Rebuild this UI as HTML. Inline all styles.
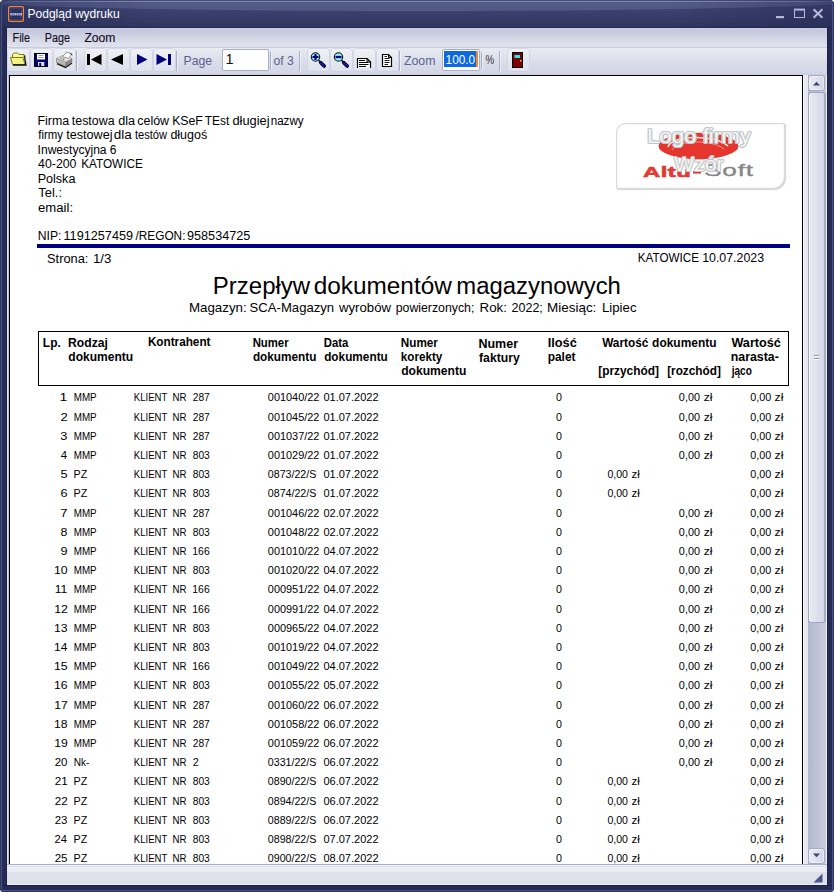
<!DOCTYPE html>
<html>
<head>
<meta charset="utf-8">
<title>Podgląd wydruku</title>
<style>
html,body{margin:0;padding:0;}
body{width:834px;height:892px;overflow:hidden;position:relative;background:#272c55;font-family:"Liberation Sans",sans-serif;}
.abs{position:absolute;}
.t{position:absolute;left:0;top:0;white-space:pre;transform-origin:0 0;font-family:"Liberation Sans",sans-serif;color:#000;}
#frame{position:absolute;left:0;top:0;width:834px;height:892px;background:#262b55;}
#titlegrad{position:absolute;left:0;top:0;width:834px;height:28px;overflow:hidden;background:linear-gradient(#2c3260 0,#2c3260 1px,#3e4573 1px,#3a416e 11px,#30365f 27px,#232852 27px,#232852 28px);}
#glass{position:absolute;left:-23px;top:-9px;width:880px;height:20px;border-radius:50%;background:rgba(140,150,190,.28);}
#tline{position:absolute;left:0;top:1px;width:834px;height:1px;background:linear-gradient(90deg,rgba(122,132,171,0) 0,rgba(122,132,171,.55) 4%,#7a84ab 18%,#7a84ab 82%,rgba(122,132,171,.55) 96%,rgba(122,132,171,0) 100%);}
#vign{position:absolute;left:0;top:0;width:834px;height:28px;background:linear-gradient(90deg,rgba(30,34,75,.4) 0,rgba(30,34,75,.34) 1.5%,rgba(30,34,75,0) 20%,rgba(30,34,75,0) 80%,rgba(30,34,75,.34) 98.5%,rgba(30,34,75,.4) 100%);}
#edgeL{position:absolute;left:0;top:28px;width:7px;height:857px;background:linear-gradient(90deg,#2e3560 0,#2e3560 1px,#465080 1px,#465080 2px,#262b55 2px,#262b55 6px,#1d224e 6px,#1d224e 7px);}
#edgeR{position:absolute;left:827px;top:28px;width:7px;height:857px;background:linear-gradient(90deg,#1d224e 0,#1d224e 1px,#262b55 1px,#262b55 5px,#465080 5px,#465080 6px,#2e3560 6px,#2e3560 7px);}
#edgeB{position:absolute;left:0;top:885px;width:834px;height:7px;background:linear-gradient(#1a1f4b 0,#1a1f4b 1px,#262b55 1px,#262b55 5px,#465080 5px,#465080 6px,#2e3560 6px,#2e3560 7px);}
#menubar{position:absolute;left:7px;top:28px;width:820px;height:20px;background:linear-gradient(#d0d3e3 0,#c6c9dd 1.5px,#c6c9dd 4px,#d2d5e4 10px,#dddfea 16px,#e0e2ec 19px,#c9ccde 19px,#c9ccde 20px);}
#toolbar{position:absolute;left:7px;top:48px;width:820px;height:27px;background:linear-gradient(#e9ebf2 0,#e3e5ee 6px,#d9dce8 16px,#d2d5e4 26px,#c9cce0 26px,#c9cce0 27px);}
.btn{position:absolute;top:49px;width:21px;height:22px;border-radius:3.5px;background:linear-gradient(#f0f1f6,#e6e8f0 50%,#dfe1ec);box-shadow:0 0 0 1px rgba(205,208,226,.7);}
.sep{position:absolute;top:51px;width:1px;height:20px;background:#a9aecb;box-shadow:1px 0 0 #eef0f6;}
.inp{position:absolute;top:49px;height:20px;background:#fff;border:1px solid #a9aecd;border-radius:2px;}
#client{position:absolute;left:7px;top:75px;width:820px;height:789px;background:linear-gradient(90deg,#dcdfec 0,#dcdfec 1px,#bbbfd8 1px,#bbbfd8 2px,#e8eaf0 2px,#e8eaf0 796px,#f4f5f9 796px,#f4f5f9 797px,#e8eaf0 797px,#e8eaf0 819px,#f0f1f7 819px,#f0f1f7 820px);}
#page{position:absolute;left:9px;top:75px;width:794px;height:789px;background:#fff;border-left:1px solid #000;border-top:1px solid #000;border-right:1px solid #000;box-sizing:border-box;}
#status{position:absolute;left:7px;top:864px;width:820px;height:21px;background:linear-gradient(#a9aeca 0,#a9aeca 1px,#f0f1f7 1px,#f0f1f7 2px,#dfe1ee 2px,#dfe1ee 3px,#eff0f5 3px,#e9ebf1 8px,#dee0ea 8px,#dee0ea 20px,#eceef4 20px,#eceef4 21px);}
#track{position:absolute;left:808px;top:75px;width:18px;height:789px;background:linear-gradient(90deg,#b3b7cf,#bcc0d6 40%,#c9ccde);}
.sbtn{position:absolute;left:808px;width:17px;height:16px;border-radius:3px;background:linear-gradient(90deg,#e9ebf2,#dfe2ec 55%,#d3d6e5);border:1px solid #a5aac8;box-sizing:border-box;box-shadow:inset 0 0 0 1px rgba(255,255,255,.5);}
#thumb{position:absolute;left:808px;top:92px;width:18px;height:531px;border-radius:3px;background:linear-gradient(90deg,#e8eaf1,#e0e3ec 45%,#d4d7e6);border:1px solid #a0a5c5;border-right:2px solid #a6abc9;box-sizing:border-box;box-shadow:inset 1px 0 0 rgba(255,255,255,.6);}
</style>
</head>
<body>
<div id="frame"></div>
<div id="titlegrad"><div id="glass"></div><div id="vign"></div><div id="tline"></div></div>
<div id="edgeB"></div><div id="edgeL"></div><div id="edgeR"></div>
<div class="abs" style="left:0;top:3px;width:2px;height:888px;background:linear-gradient(90deg,#2e3560 0,#2e3560 1px,#465080 1px,#465080 2px)"></div>
<div class="abs" style="left:832px;top:3px;width:2px;height:888px;background:linear-gradient(90deg,#465080 0,#465080 1px,#2e3560 1px,#2e3560 2px)"></div>
<!-- rounded window corners -->
<svg class="abs" style="left:0;top:0" width="834" height="892">
  <path d="M0 0h2.2L0 2.2z" fill="#fff"/><path d="M834 0h-2.200l2.200 2.200z" fill="#fff"/>
  <path d="M0 892h2L0 890z" fill="#e8e8ee"/><path d="M834 892h-2l2-2z" fill="#e8e8ee"/>
</svg>
<!-- app icon -->
<svg class="abs" style="left:8px;top:6px" width="16" height="16" viewBox="0 0 16 16">
  <path d="M1.600 .600h12.800l1 1v12.800l-1 1h-12.800l-1-1v-12.800z" fill="#2a3060" stroke="#f08438" stroke-width="1.200"/>
  <rect x="2.500" y="2.500" width="11" height="11" fill="none" stroke="#34427c" stroke-width="1"/>
  <rect x="2.400" y="7" width="11.600" height="2.400" fill="#b9bcd6"/>
  <path d="M4.400 7v2.400M6.200 7v2.400M8.400 7v2.400M10.400 7v2.400M12 7v2.400" stroke="#39406e" stroke-width=".6"/>
</svg>
<span id="t360" class="t" style="font-size:13px;line-height:13px;color:#fff;transform:translate(27.60px,7px) scaleX(0.9227);">Podgląd wydruku</span>
<!-- window buttons -->
<svg class="abs" style="left:770px;top:4px" width="60" height="20" viewBox="0 0 60 20">
  <rect x="6" y="12" width="8" height="2.2" fill="#b4b8d6"/>
  <rect x="24.5" y="5.5" width="10" height="8" fill="none" stroke="#b4b8d6" stroke-width="1"/>
  <rect x="24" y="4.6" width="11" height="2" fill="#b4b8d6"/>
  <path d="M43.6 5.2l8.8 8.6M52.4 5.2l-8.8 8.6" stroke="#b4b8d6" stroke-width="2.1" fill="none"/>
</svg>

<div id="menubar"></div>
<span id="t361" class="t" style="font-size:12px;line-height:12px;color:#150f25;transform:translate(12.60px,32px) scaleX(0.8954);-webkit-text-stroke:0.15px #150f25;">File</span>
<span id="t362" class="t" style="font-size:12px;line-height:12px;color:#150f25;transform:translate(44.80px,32px) scaleX(0.8994);-webkit-text-stroke:0.15px #150f25;">Page</span>
<span id="t363" class="t" style="font-size:12px;line-height:12px;color:#150f25;transform:translate(84.40px,32px) scaleX(1.0111);-webkit-text-stroke:0.15px #150f25;">Zoom</span>
<div id="toolbar"></div>

<!-- toolbar buttons -->
<div class="btn" style="left:8px"></div><div class="btn" style="left:31px"></div><div class="btn" style="left:54px"></div>
<div class="sep" style="left:76px"></div>
<div class="btn" style="left:85px"></div><div class="btn" style="left:108px"></div><div class="btn" style="left:131px"></div><div class="btn" style="left:154px"></div>
<div class="sep" style="left:176px"></div>
<div class="inp" style="left:222px;width:45px"></div>
<div class="sep" style="left:270px;top:52px;height:17px"></div>
<div class="sep" style="left:299px"></div>
<div class="btn" style="left:308px"></div><div class="btn" style="left:331px"></div><div class="btn" style="left:354px"></div><div class="btn" style="left:377px"></div>
<div class="sep" style="left:399px"></div>
<div class="inp" style="left:442px;width:36px"></div>
<div class="abs" style="left:444px;top:51px;width:32px;height:16px;background:#0d6ade"></div>
<div class="abs" style="left:476px;top:51px;width:1.500px;height:16px;background:#f08a30"></div>
<div class="sep" style="left:481px;top:52px;height:17px"></div>
<div class="sep" style="left:499px"></div>
<div class="btn" style="left:508px"></div>

<!-- toolbar icons -->
<svg class="abs" style="left:7px;top:48px" width="530" height="27" viewBox="7 48 530 27" shape-rendering="auto">
  <!-- open folder -->
  <path d="M12.500 57.500v-3l1.500-1.500h3.500l1.500 1.500h5v3" fill="#f6f6a6" stroke="#808000" stroke-width="1"/>
  <path d="M10.500 57.500h12.500l2 7h-12.500z" fill="#f2f284" stroke="#808000" stroke-width="1"/>
  <path d="M24.700 55.500v2.500l1.300 7h-13" fill="none" stroke="#111" stroke-width="1.300"/>
  <!-- save -->
  <rect x="34.500" y="53.500" width="13" height="13" fill="#00007f" stroke="#000" stroke-width="1"/>
  <rect x="37" y="54" width="8" height="5.500" fill="#fff"/>
  <path d="M38.500 55.500h5M38.500 57.500h5" stroke="#9a9a9a" stroke-width=".9"/>
  <rect x="38" y="62" width="6.300" height="4" fill="#dcdde6"/>
  <rect x="39.200" y="63" width="2" height="3" fill="#00007f"/>
  <!-- printer -->
  <path d="M57 63.500l8.500 4 6.500-4.500" stroke="#1a1a1a" stroke-width="1.500" fill="none"/>
  <path d="M56.500 58.500l9.500 3.500v4l-9.500-3.500z" fill="#bcbcbc" stroke="#7a7a7a" stroke-width=".6"/>
  <path d="M66 62l6-3.500v3.500l-6 4z" fill="#8a8a8a" stroke="#666" stroke-width=".5"/>
  <path d="M56.500 58.500l6-3 9.500 3-6 3.500z" fill="#e6e6e6" stroke="#8a8a8a" stroke-width=".6"/>
  <path d="M62.500 56.800l4-4.800 5.500 2-3.500 4.400z" fill="#fff" stroke="#6a6a6a" stroke-width=".7"/>
  <path d="M70 53.300l2.300 1.700" stroke="#222" stroke-width=".9"/>
  <rect x="60" y="57.600" width="2" height="1.200" fill="#20d040"/><rect x="62.500" y="58.600" width="2" height="1.200" fill="#f03030"/>
  <!-- first -->
  <rect x="87" y="54" width="3" height="11" fill="#000"/><path d="M101.500 54v11l-10.500-5.500z" fill="#000"/>
  <!-- prev -->
  <path d="M123 54v11l-12-5.500z" fill="#000"/>
  <!-- next -->
  <path d="M137 54v11l10.500-5.500z" fill="#00007f"/>
  <!-- last -->
  <path d="M156.500 54v11l10.500-5.500z" fill="#00007f"/><rect x="168" y="54" width="3" height="11" fill="#00007f"/>
  <!-- zoom in -->
  <path d="M318.5 60.200l3 3" stroke="#000" stroke-width="1.400"/>
  <path d="M320.8 62.700l3.400 3.400" stroke="#000" stroke-width="3.600" stroke-linecap="round"/>
  <path d="M321.0 62.900l3 3" stroke="#1414d0" stroke-width="2" stroke-linecap="round"/>
  <circle cx="315.5" cy="57" r="4.200" fill="#8aeef4" stroke="#111" stroke-width="1.100"/>
  <path d="M312.500 57h6M315.500 54v6" stroke="#00007f" stroke-width="2.200"/>
  <!-- zoom out -->
  <path d="M341.5 60.200l3 3" stroke="#000" stroke-width="1.400"/>
  <path d="M343.8 62.700l3.400 3.400" stroke="#000" stroke-width="3.600" stroke-linecap="round"/>
  <path d="M344.0 62.900l3 3" stroke="#1414d0" stroke-width="2" stroke-linecap="round"/>
  <circle cx="338.5" cy="57" r="4.200" fill="#8aeef4" stroke="#111" stroke-width="1.100"/>
  <path d="M335.500 57h6" stroke="#00007f" stroke-width="2.200"/>
  <!-- page width -->
  <path d="M357.500 68v-9.500h9.500l3.500 3.500v6" fill="#fff" stroke="#000" stroke-width="1.200"/>
  <path d="M367 58.500v3.500h3.500" fill="none" stroke="#000" stroke-width="1"/>
  <path d="M359 60.500h6M359 62.500h9.500M359 64.500h9.500M359 66.500h7" stroke="#000" stroke-width="1"/>
  <!-- whole page -->
  <path d="M382.500 54.500h6l3 3v9h-9z" fill="#fff" stroke="#000" stroke-width="1.200"/>
  <path d="M388.500 54.500v3h3" fill="none" stroke="#000" stroke-width="1"/>
  <path d="M384.500 56.500h2.500M384.500 58.500h5M384.500 60.500h5M384.500 62.500h5M384.500 64.500h3.500" stroke="#000" stroke-width=".9"/>
  <!-- door -->
  <rect x="512.500" y="52.500" width="10" height="15" fill="#7f0000" stroke="#000" stroke-width="1"/>
  <rect x="514.500" y="55" width="5.500" height="3" fill="#20ecf4"/>
  <rect x="520" y="60" width="1.500" height="1.500" fill="#f6d63a"/>
</svg>
<span id="t364" class="t" style="font-size:13px;line-height:13px;color:#5a6291;transform:translate(183.60px,54px) scaleX(0.9389);">Page</span>
<span id="t365" class="t" style="font-size:14.5px;line-height:14.5px;color:#111;transform:translate(225.40px,52px);">1</span>
<span id="t366" class="t" style="font-size:13px;line-height:13px;color:#5a6291;transform:translate(273.40px,54px) scaleX(0.9351);">of 3</span>
<span id="t367" class="t" style="font-size:13px;line-height:13px;color:#5a6291;transform:translate(404.00px,54px) scaleX(0.9454);">Zoom</span>
<span id="t368" class="t" style="font-size:13.5px;line-height:13.5px;color:#fff;transform:translate(445.60px,53px) scaleX(0.8753);">100.0</span>
<span id="t369" class="t" style="font-size:12px;line-height:12px;color:#333;transform:translate(485.50px,54px) scaleX(0.8146);">%</span>

<!-- client -->
<div id="client"></div>
<div id="page"></div>
<div id="track"></div>
<div class="sbtn" style="top:75px"></div>
<div id="thumb"></div>
<div class="sbtn" style="top:848px"></div>
<svg class="abs" style="left:808px;top:75px" width="18" height="789" viewBox="808 75 18 789">
  <path d="M813 85.500h7l-3.500-3.800z" fill="#3c4480"/>
  <path d="M813 853.500h7l-3.500 3.800z" fill="#3c4480"/>
  <path d="M814 355.500h5M814 358.500h5" stroke="#8e94b8" stroke-width="1"/>
  <path d="M814 356.500h5M814 359.500h5" stroke="#fff" stroke-width="1"/>
</svg>
<div id="status"></div>
<svg class="abs" style="left:810px;top:870px" width="16" height="14" viewBox="0 0 16 14"><path d="M3.500 12.500h9v-9z" fill="#4c548a"/></svg>

<!-- document -->
<div class="abs" style="left:37px;top:244px;width:753px;height:4px;background:#000080"></div>
<div class="abs" style="left:38px;top:331px;width:751px;height:55px;border:1px solid #000;box-sizing:border-box"></div>
<!-- logo -->
<div class="abs" style="left:616px;top:123px;width:169px;height:66px;border-radius:9px 1px 12px 1px;background:#fff;border:1px solid #dadada;box-sizing:border-box;box-shadow:1px 1px 1px #d4d4d4, inset 0 0 2px #e4e4e4;"></div>
<svg class="abs" style="left:615px;top:122px" width="170" height="67" viewBox="615 122 170 67">
  <ellipse cx="698.500" cy="146" rx="40" ry="13.200" fill="#e6352c"/>
  <path d="M668 147c3-12 48-13 60-1" fill="none" stroke="#fff" stroke-width="1.600" opacity=".9"/>
  <path d="M672 150c6-10 40-11 52-1" fill="none" stroke="#f5b0a8" stroke-width="1" opacity=".8"/>
  <rect x="693" y="171" width="8" height="2.600" fill="#e03a34"/>
</svg>
<span class="t" style="left:643px;top:164px;font-size:14.500px;line-height:16px;font-weight:bold;color:#e23a34;-webkit-text-stroke:.6px #e23a34;transform:scaleX(1.640);letter-spacing:.3px">Altu</span>
<span class="t" style="left:704px;top:162.6px;font-size:16px;line-height:16px;color:#858585;-webkit-text-stroke:.3px #858585;transform:scaleX(1.640);letter-spacing:.5px">Soft</span>
<span class="t" style="left:647px;top:126px;font-size:19.500px;line-height:20px;color:#f8f6e6;transform:scaleX(1.140);text-shadow:-1px 0 0 #bcc4d6,1px 0 0 #bcc4d6,0 -1px 0 #bcc4d6,0 1px 0 #bcc4d6,-.7px -.7px 0 #ccd2de,.7px .7px 0 #ccd2de,.7px -.7px 0 #ccd2de,-.7px .7px 0 #ccd2de">Logo firmy</span>
<span class="t" style="left:674px;top:154px;font-size:19.500px;line-height:20px;color:#f8f6e6;transform:scaleX(1.090);text-shadow:-1px 0 0 #bcc4d6,1px 0 0 #bcc4d6,0 -1px 0 #bcc4d6,0 1px 0 #bcc4d6,-.7px -.7px 0 #ccd2de,.7px .7px 0 #ccd2de,.7px -.7px 0 #ccd2de,-.7px .7px 0 #ccd2de">Wzór</span>
<span id="t0" class="t" style="font-size:12px;line-height:12px;transform:translate(37.56px,115px) scaleX(1.0292);">Firma</span>
<span id="t1" class="t" style="font-size:12px;line-height:12px;transform:translate(71.85px,115px) scaleX(1.0318);">testowa</span>
<span id="t2" class="t" style="font-size:12px;line-height:12px;transform:translate(118.13px,115px) scaleX(1.0539);">dla</span>
<span id="t3" class="t" style="font-size:12px;line-height:12px;transform:translate(137.23px,115px) scaleX(1.0373);">celów</span>
<span id="t4" class="t" style="font-size:12px;line-height:12px;transform:translate(172.15px,115px) scaleX(1.0211);">KSeF</span>
<span id="t5" class="t" style="font-size:12px;line-height:12px;transform:translate(204.72px,115px) scaleX(0.9966);">TEst</span>
<span id="t6" class="t" style="font-size:12px;line-height:12px;transform:translate(232.46px,115px) scaleX(1.0694);">długiej</span>
<span id="t7" class="t" style="font-size:12px;line-height:12px;transform:translate(270.66px,115px) scaleX(0.9709);">nazwy</span>
<span id="t8" class="t" style="font-size:12px;line-height:12px;transform:translate(38.32px,129px) scaleX(0.9507);">firmy</span>
<span id="t9" class="t" style="font-size:12px;line-height:12px;transform:translate(66.22px,129px) scaleX(1.0522);">testowej</span>
<span id="t10" class="t" style="font-size:12px;line-height:12px;transform:translate(113.64px,129px) scaleX(1.1251);">dla</span>
<span id="t11" class="t" style="font-size:12px;line-height:12px;transform:translate(134.97px,129px) scaleX(0.9249);">testów</span>
<span id="t12" class="t" style="font-size:12px;line-height:12px;transform:translate(170.39px,129px) scaleX(1.0405);">długoś</span>
<span id="t13" class="t" style="font-size:12px;line-height:12px;transform:translate(37.61px,144px) scaleX(1.0031);">Inwestycyjna 6</span>
<span id="t14" class="t" style="font-size:12px;line-height:12px;transform:translate(38.08px,158px) scaleX(1.0267);">40-200</span>
<span id="t15" class="t" style="font-size:12px;line-height:12px;transform:translate(81.17px,158px) scaleX(0.9794);">KATOWICE</span>
<span id="t16" class="t" style="font-size:12px;line-height:12px;transform:translate(37.63px,173px) scaleX(1.0487);">Polska</span>
<span id="t17" class="t" style="font-size:12px;line-height:12px;transform:translate(38.34px,187px) scaleX(1.0759);">Tel.:</span>
<span id="t18" class="t" style="font-size:12px;line-height:12px;transform:translate(38.03px,202px) scaleX(1.0936);">email:</span>
<span id="t19" class="t" style="font-size:12px;line-height:12px;transform:translate(37.71px,230px) scaleX(1.0139);">NIP:</span>
<span id="t20" class="t" style="font-size:12px;line-height:12px;transform:translate(63.50px,230px) scaleX(1.0563);">1191257459</span>
<span id="t21" class="t" style="font-size:12px;line-height:12px;transform:translate(135.50px,230px) scaleX(0.9854);">/REGON:</span>
<span id="t22" class="t" style="font-size:12px;line-height:12px;transform:translate(186.98px,230px) scaleX(1.0554);">958534725</span>
<span id="t23" class="t" style="font-size:12px;line-height:12px;transform:translate(47.05px,253px) scaleX(1.0681);">Strona:</span>
<span id="t24" class="t" style="font-size:12px;line-height:12px;transform:translate(92.91px,253px) scaleX(1.1020);">1/3</span>
<span id="t25" class="t" style="font-size:12px;line-height:12px;transform:translate(637.74px,252px) scaleX(0.9744);">KATOWICE</span>
<span id="t26" class="t" style="font-size:12px;line-height:12px;transform:translate(702.13px,252px) scaleX(1.0310);">10.07.2023</span>
<span id="t27" class="t" style="font-size:23.33px;line-height:23.33px;transform:translate(212.74px,275px) scaleX(1.0297);">Przepływ</span>
<span id="t28" class="t" style="font-size:23.33px;line-height:23.33px;transform:translate(313.65px,275px) scaleX(1.0444);">dokumentów</span>
<span id="t29" class="t" style="font-size:23.33px;line-height:23.33px;transform:translate(456.36px,275px) scaleX(1.0231);">magazynowych</span>
<span id="t30" class="t" style="font-size:13.33px;line-height:13.33px;transform:translate(188.94px,301px);">Magazyn:</span>
<span id="t31" class="t" style="font-size:13.33px;line-height:13.33px;transform:translate(249.62px,301px) scaleX(0.9836);">SCA-Magazyn</span>
<span id="t32" class="t" style="font-size:13.33px;line-height:13.33px;transform:translate(339.02px,301px) scaleX(0.9881);">wyrobów</span>
<span id="t33" class="t" style="font-size:13.33px;line-height:13.33px;transform:translate(395.71px,301px) scaleX(0.9234);">powierzonych;</span>
<span id="t34" class="t" style="font-size:13.33px;line-height:13.33px;transform:translate(479.53px,301px);">Rok:</span>
<span id="t35" class="t" style="font-size:13.33px;line-height:13.33px;transform:translate(511.51px,301px) scaleX(0.9390);">2022;</span>
<span id="t36" class="t" style="font-size:13.33px;line-height:13.33px;transform:translate(547.07px,301px) scaleX(1.0083);">Miesiąc:</span>
<span id="t37" class="t" style="font-size:13.33px;line-height:13.33px;transform:translate(601.90px,301px) scaleX(0.9939);">Lipiec</span>
<span id="t38" class="t" style="font-size:12px;line-height:12px;font-weight:bold;transform:translate(42.86px,337px) scaleX(0.9953);">Lp.</span>
<span id="t39" class="t" style="font-size:12px;line-height:12px;font-weight:bold;transform:translate(68.07px,337px) scaleX(1.0130);">Rodzaj</span>
<span id="t40" class="t" style="font-size:12px;line-height:12px;font-weight:bold;transform:translate(68.34px,351px) scaleX(1.0035);">dokumentu</span>
<span id="t41" class="t" style="font-size:12px;line-height:12px;font-weight:bold;transform:translate(147.88px,336px) scaleX(0.9782);">Kontrahent</span>
<span id="t42" class="t" style="font-size:12px;line-height:12px;font-weight:bold;transform:translate(252.63px,337px) scaleX(0.9456);">Numer</span>
<span id="t43" class="t" style="font-size:12px;line-height:12px;font-weight:bold;transform:translate(252.92px,351px) scaleX(0.9806);">dokumentu</span>
<span id="t44" class="t" style="font-size:12px;line-height:12px;font-weight:bold;transform:translate(323.80px,337px) scaleX(0.9469);">Data</span>
<span id="t45" class="t" style="font-size:12px;line-height:12px;font-weight:bold;transform:translate(324.13px,351px) scaleX(0.9842);">dokumentu</span>
<span id="t46" class="t" style="font-size:12px;line-height:12px;font-weight:bold;transform:translate(400.81px,337px) scaleX(0.9763);">Numer</span>
<span id="t47" class="t" style="font-size:12px;line-height:12px;font-weight:bold;transform:translate(400.79px,351px) scaleX(0.9716);">korekty</span>
<span id="t48" class="t" style="font-size:12px;line-height:12px;font-weight:bold;transform:translate(401.17px,365px) scaleX(1.0076);">dokumentu</span>
<span id="t49" class="t" style="font-size:12px;line-height:12px;font-weight:bold;transform:translate(478.46px,338px) scaleX(1.0404);">Numer</span>
<span id="t50" class="t" style="font-size:12px;line-height:12px;font-weight:bold;transform:translate(479.04px,352px) scaleX(1.0159);">faktury</span>
<span id="t51" class="t" style="font-size:12px;line-height:12px;font-weight:bold;transform:translate(547.73px,337px) scaleX(1.0617);">Ilość</span>
<span id="t52" class="t" style="font-size:12px;line-height:12px;font-weight:bold;transform:translate(547.68px,351px) scaleX(0.9936);">palet</span>
<span id="t53" class="t" style="font-size:12px;line-height:12px;font-weight:bold;transform:translate(602.15px,337px) scaleX(0.9850);">Wartość</span>
<span id="t54" class="t" style="font-size:12px;line-height:12px;font-weight:bold;transform:translate(652.12px,337px) scaleX(0.9946);">dokumentu</span>
<span id="t55" class="t" style="font-size:12px;line-height:12px;font-weight:bold;transform:translate(598.25px,365px) scaleX(0.9881);">[przychód]</span>
<span id="t56" class="t" style="font-size:12px;line-height:12px;font-weight:bold;transform:translate(667.14px,365px) scaleX(0.9818);">[rozchód]</span>
<span id="t57" class="t" style="font-size:12px;line-height:12px;font-weight:bold;transform:translate(731.41px,337px) scaleX(1.0525);">Wartość</span>
<span id="t58" class="t" style="font-size:12px;line-height:12px;font-weight:bold;transform:translate(730.73px,351px) scaleX(1.0294);">narasta-</span>
<span id="t59" class="t" style="font-size:12px;line-height:12px;font-weight:bold;transform:translate(731.66px,365px) scaleX(0.8389);">jąco</span>
<span id="t60" class="t" style="font-size:10.67px;line-height:10.67px;transform:translate(59.61px,392px) scaleX(1.3185);">1</span>
<span id="t61" class="t" style="font-size:10.67px;line-height:10.67px;transform:translate(73.72px,392px) scaleX(0.9192);">MMP</span>
<span id="t62" class="t" style="font-size:10.67px;line-height:10.67px;transform:translate(133.87px,392px) scaleX(0.8952);">KLIENT</span>
<span id="t63" class="t" style="font-size:10.67px;line-height:10.67px;transform:translate(172.62px,392px) scaleX(0.9096);">NR</span>
<span id="t64" class="t" style="font-size:10.67px;line-height:10.67px;transform:translate(192.77px,392px) scaleX(0.9579);">287</span>
<span id="t65" class="t" style="font-size:10.67px;line-height:10.67px;transform:translate(267.86px,392px) scaleX(1.0231);">001040/22</span>
<span id="t66" class="t" style="font-size:10.67px;line-height:10.67px;transform:translate(323.39px,392px) scaleX(1.0342);">01.07.2022</span>
<span id="t67" class="t" style="font-size:10.67px;line-height:10.67px;transform:translate(556.03px,392px);">0</span>
<span id="t68" class="t" style="font-size:10.67px;line-height:10.67px;transform:translate(678.87px,392px) scaleX(1.0168);">0,00</span>
<span id="t69" class="t" style="font-size:10.67px;line-height:10.67px;transform:translate(703.77px,392px) scaleX(1.1455);">zł</span>
<span id="t70" class="t" style="font-size:10.67px;line-height:10.67px;transform:translate(750.37px,392px) scaleX(1.0095);">0,00</span>
<span id="t71" class="t" style="font-size:10.67px;line-height:10.67px;transform:translate(774.61px,392px) scaleX(1.1503);">zł</span>
<span id="t72" class="t" style="font-size:10.67px;line-height:10.67px;transform:translate(60.48px,412px) scaleX(1.2158);">2</span>
<span id="t73" class="t" style="font-size:10.67px;line-height:10.67px;transform:translate(73.72px,412px) scaleX(0.9192);">MMP</span>
<span id="t74" class="t" style="font-size:10.67px;line-height:10.67px;transform:translate(133.87px,412px) scaleX(0.8952);">KLIENT</span>
<span id="t75" class="t" style="font-size:10.67px;line-height:10.67px;transform:translate(172.62px,412px) scaleX(0.9096);">NR</span>
<span id="t76" class="t" style="font-size:10.67px;line-height:10.67px;transform:translate(192.77px,412px) scaleX(0.9579);">287</span>
<span id="t77" class="t" style="font-size:10.67px;line-height:10.67px;transform:translate(267.86px,412px) scaleX(1.0231);">001045/22</span>
<span id="t78" class="t" style="font-size:10.67px;line-height:10.67px;transform:translate(323.39px,412px) scaleX(1.0342);">01.07.2022</span>
<span id="t79" class="t" style="font-size:10.67px;line-height:10.67px;transform:translate(556.03px,412px);">0</span>
<span id="t80" class="t" style="font-size:10.67px;line-height:10.67px;transform:translate(678.87px,412px) scaleX(1.0168);">0,00</span>
<span id="t81" class="t" style="font-size:10.67px;line-height:10.67px;transform:translate(703.77px,412px) scaleX(1.1455);">zł</span>
<span id="t82" class="t" style="font-size:10.67px;line-height:10.67px;transform:translate(750.37px,412px) scaleX(1.0095);">0,00</span>
<span id="t83" class="t" style="font-size:10.67px;line-height:10.67px;transform:translate(774.61px,412px) scaleX(1.1503);">zł</span>
<span id="t84" class="t" style="font-size:10.67px;line-height:10.67px;transform:translate(60.36px,431px) scaleX(1.1988);">3</span>
<span id="t85" class="t" style="font-size:10.67px;line-height:10.67px;transform:translate(73.72px,431px) scaleX(0.9192);">MMP</span>
<span id="t86" class="t" style="font-size:10.67px;line-height:10.67px;transform:translate(133.87px,431px) scaleX(0.8952);">KLIENT</span>
<span id="t87" class="t" style="font-size:10.67px;line-height:10.67px;transform:translate(172.62px,431px) scaleX(0.9096);">NR</span>
<span id="t88" class="t" style="font-size:10.67px;line-height:10.67px;transform:translate(192.77px,431px) scaleX(0.9579);">287</span>
<span id="t89" class="t" style="font-size:10.67px;line-height:10.67px;transform:translate(267.86px,431px) scaleX(1.0231);">001037/22</span>
<span id="t90" class="t" style="font-size:10.67px;line-height:10.67px;transform:translate(323.39px,431px) scaleX(1.0342);">01.07.2022</span>
<span id="t91" class="t" style="font-size:10.67px;line-height:10.67px;transform:translate(556.03px,431px);">0</span>
<span id="t92" class="t" style="font-size:10.67px;line-height:10.67px;transform:translate(678.87px,431px) scaleX(1.0168);">0,00</span>
<span id="t93" class="t" style="font-size:10.67px;line-height:10.67px;transform:translate(703.77px,431px) scaleX(1.1455);">zł</span>
<span id="t94" class="t" style="font-size:10.67px;line-height:10.67px;transform:translate(750.37px,431px) scaleX(1.0095);">0,00</span>
<span id="t95" class="t" style="font-size:10.67px;line-height:10.67px;transform:translate(774.61px,431px) scaleX(1.1503);">zł</span>
<span id="t96" class="t" style="font-size:10.67px;line-height:10.67px;transform:translate(60.85px,450px) scaleX(1.0752);">4</span>
<span id="t97" class="t" style="font-size:10.67px;line-height:10.67px;transform:translate(73.72px,450px) scaleX(0.9192);">MMP</span>
<span id="t98" class="t" style="font-size:10.67px;line-height:10.67px;transform:translate(133.87px,450px) scaleX(0.8952);">KLIENT</span>
<span id="t99" class="t" style="font-size:10.67px;line-height:10.67px;transform:translate(172.62px,450px) scaleX(0.9096);">NR</span>
<span id="t100" class="t" style="font-size:10.67px;line-height:10.67px;transform:translate(192.70px,450px) scaleX(0.9627);">803</span>
<span id="t101" class="t" style="font-size:10.67px;line-height:10.67px;transform:translate(267.86px,450px) scaleX(1.0231);">001029/22</span>
<span id="t102" class="t" style="font-size:10.67px;line-height:10.67px;transform:translate(323.39px,450px) scaleX(1.0342);">01.07.2022</span>
<span id="t103" class="t" style="font-size:10.67px;line-height:10.67px;transform:translate(556.03px,450px);">0</span>
<span id="t104" class="t" style="font-size:10.67px;line-height:10.67px;transform:translate(678.87px,450px) scaleX(1.0168);">0,00</span>
<span id="t105" class="t" style="font-size:10.67px;line-height:10.67px;transform:translate(703.77px,450px) scaleX(1.1455);">zł</span>
<span id="t106" class="t" style="font-size:10.67px;line-height:10.67px;transform:translate(750.37px,450px) scaleX(1.0095);">0,00</span>
<span id="t107" class="t" style="font-size:10.67px;line-height:10.67px;transform:translate(774.61px,450px) scaleX(1.1503);">zł</span>
<span id="t108" class="t" style="font-size:10.67px;line-height:10.67px;transform:translate(60.40px,469px) scaleX(1.1931);">5</span>
<span id="t109" class="t" style="font-size:10.67px;line-height:10.67px;transform:translate(73.56px,469px) scaleX(1.0094);">PZ</span>
<span id="t110" class="t" style="font-size:10.67px;line-height:10.67px;transform:translate(133.87px,469px) scaleX(0.8952);">KLIENT</span>
<span id="t111" class="t" style="font-size:10.67px;line-height:10.67px;transform:translate(172.62px,469px) scaleX(0.9096);">NR</span>
<span id="t112" class="t" style="font-size:10.67px;line-height:10.67px;transform:translate(192.70px,469px) scaleX(0.9627);">803</span>
<span id="t113" class="t" style="font-size:10.67px;line-height:10.67px;transform:translate(267.85px,469px) scaleX(0.9974);">0873/22/S</span>
<span id="t114" class="t" style="font-size:10.67px;line-height:10.67px;transform:translate(323.39px,469px) scaleX(1.0342);">01.07.2022</span>
<span id="t115" class="t" style="font-size:10.67px;line-height:10.67px;transform:translate(556.03px,469px);">0</span>
<span id="t116" class="t" style="font-size:10.67px;line-height:10.67px;transform:translate(607.41px,469px) scaleX(0.9891);">0,00</span>
<span id="t117" class="t" style="font-size:10.67px;line-height:10.67px;transform:translate(631.53px,469px) scaleX(1.0829);">zł</span>
<span id="t118" class="t" style="font-size:10.67px;line-height:10.67px;transform:translate(750.37px,469px) scaleX(1.0095);">0,00</span>
<span id="t119" class="t" style="font-size:10.67px;line-height:10.67px;transform:translate(774.61px,469px) scaleX(1.1503);">zł</span>
<span id="t120" class="t" style="font-size:10.67px;line-height:10.67px;transform:translate(60.46px,488px) scaleX(1.1909);">6</span>
<span id="t121" class="t" style="font-size:10.67px;line-height:10.67px;transform:translate(73.56px,488px) scaleX(1.0094);">PZ</span>
<span id="t122" class="t" style="font-size:10.67px;line-height:10.67px;transform:translate(133.87px,488px) scaleX(0.8952);">KLIENT</span>
<span id="t123" class="t" style="font-size:10.67px;line-height:10.67px;transform:translate(172.62px,488px) scaleX(0.9096);">NR</span>
<span id="t124" class="t" style="font-size:10.67px;line-height:10.67px;transform:translate(192.70px,488px) scaleX(0.9627);">803</span>
<span id="t125" class="t" style="font-size:10.67px;line-height:10.67px;transform:translate(267.85px,488px) scaleX(0.9974);">0874/22/S</span>
<span id="t126" class="t" style="font-size:10.67px;line-height:10.67px;transform:translate(323.39px,488px) scaleX(1.0342);">01.07.2022</span>
<span id="t127" class="t" style="font-size:10.67px;line-height:10.67px;transform:translate(556.03px,488px);">0</span>
<span id="t128" class="t" style="font-size:10.67px;line-height:10.67px;transform:translate(607.41px,488px) scaleX(0.9891);">0,00</span>
<span id="t129" class="t" style="font-size:10.67px;line-height:10.67px;transform:translate(631.53px,488px) scaleX(1.0829);">zł</span>
<span id="t130" class="t" style="font-size:10.67px;line-height:10.67px;transform:translate(750.37px,488px) scaleX(1.0095);">0,00</span>
<span id="t131" class="t" style="font-size:10.67px;line-height:10.67px;transform:translate(774.61px,488px) scaleX(1.1503);">zł</span>
<span id="t132" class="t" style="font-size:10.67px;line-height:10.67px;transform:translate(60.25px,508px) scaleX(1.2137);">7</span>
<span id="t133" class="t" style="font-size:10.67px;line-height:10.67px;transform:translate(73.72px,508px) scaleX(0.9192);">MMP</span>
<span id="t134" class="t" style="font-size:10.67px;line-height:10.67px;transform:translate(133.87px,508px) scaleX(0.8952);">KLIENT</span>
<span id="t135" class="t" style="font-size:10.67px;line-height:10.67px;transform:translate(172.62px,508px) scaleX(0.9096);">NR</span>
<span id="t136" class="t" style="font-size:10.67px;line-height:10.67px;transform:translate(192.77px,508px) scaleX(0.9579);">287</span>
<span id="t137" class="t" style="font-size:10.67px;line-height:10.67px;transform:translate(267.86px,508px) scaleX(1.0231);">001046/22</span>
<span id="t138" class="t" style="font-size:10.67px;line-height:10.67px;transform:translate(323.39px,508px) scaleX(1.0342);">02.07.2022</span>
<span id="t139" class="t" style="font-size:10.67px;line-height:10.67px;transform:translate(556.03px,508px);">0</span>
<span id="t140" class="t" style="font-size:10.67px;line-height:10.67px;transform:translate(678.87px,508px) scaleX(1.0168);">0,00</span>
<span id="t141" class="t" style="font-size:10.67px;line-height:10.67px;transform:translate(703.77px,508px) scaleX(1.1455);">zł</span>
<span id="t142" class="t" style="font-size:10.67px;line-height:10.67px;transform:translate(750.37px,508px) scaleX(1.0095);">0,00</span>
<span id="t143" class="t" style="font-size:10.67px;line-height:10.67px;transform:translate(774.61px,508px) scaleX(1.1503);">zł</span>
<span id="t144" class="t" style="font-size:10.67px;line-height:10.67px;transform:translate(60.56px,527px) scaleX(1.1664);">8</span>
<span id="t145" class="t" style="font-size:10.67px;line-height:10.67px;transform:translate(73.72px,527px) scaleX(0.9192);">MMP</span>
<span id="t146" class="t" style="font-size:10.67px;line-height:10.67px;transform:translate(133.87px,527px) scaleX(0.8952);">KLIENT</span>
<span id="t147" class="t" style="font-size:10.67px;line-height:10.67px;transform:translate(172.62px,527px) scaleX(0.9096);">NR</span>
<span id="t148" class="t" style="font-size:10.67px;line-height:10.67px;transform:translate(192.70px,527px) scaleX(0.9627);">803</span>
<span id="t149" class="t" style="font-size:10.67px;line-height:10.67px;transform:translate(267.86px,527px) scaleX(1.0231);">001048/22</span>
<span id="t150" class="t" style="font-size:10.67px;line-height:10.67px;transform:translate(323.39px,527px) scaleX(1.0342);">02.07.2022</span>
<span id="t151" class="t" style="font-size:10.67px;line-height:10.67px;transform:translate(556.03px,527px);">0</span>
<span id="t152" class="t" style="font-size:10.67px;line-height:10.67px;transform:translate(678.87px,527px) scaleX(1.0168);">0,00</span>
<span id="t153" class="t" style="font-size:10.67px;line-height:10.67px;transform:translate(703.77px,527px) scaleX(1.1455);">zł</span>
<span id="t154" class="t" style="font-size:10.67px;line-height:10.67px;transform:translate(750.37px,527px) scaleX(1.0095);">0,00</span>
<span id="t155" class="t" style="font-size:10.67px;line-height:10.67px;transform:translate(774.61px,527px) scaleX(1.1503);">zł</span>
<span id="t156" class="t" style="font-size:10.67px;line-height:10.67px;transform:translate(60.42px,546px) scaleX(1.1822);">9</span>
<span id="t157" class="t" style="font-size:10.67px;line-height:10.67px;transform:translate(73.72px,546px) scaleX(0.9192);">MMP</span>
<span id="t158" class="t" style="font-size:10.67px;line-height:10.67px;transform:translate(133.87px,546px) scaleX(0.8952);">KLIENT</span>
<span id="t159" class="t" style="font-size:10.67px;line-height:10.67px;transform:translate(172.62px,546px) scaleX(0.9096);">NR</span>
<span id="t160" class="t" style="font-size:10.67px;line-height:10.67px;transform:translate(192.28px,546px) scaleX(0.9791);">166</span>
<span id="t161" class="t" style="font-size:10.67px;line-height:10.67px;transform:translate(267.86px,546px) scaleX(1.0231);">001010/22</span>
<span id="t162" class="t" style="font-size:10.67px;line-height:10.67px;transform:translate(323.39px,546px) scaleX(1.0342);">04.07.2022</span>
<span id="t163" class="t" style="font-size:10.67px;line-height:10.67px;transform:translate(556.03px,546px);">0</span>
<span id="t164" class="t" style="font-size:10.67px;line-height:10.67px;transform:translate(678.87px,546px) scaleX(1.0168);">0,00</span>
<span id="t165" class="t" style="font-size:10.67px;line-height:10.67px;transform:translate(703.77px,546px) scaleX(1.1455);">zł</span>
<span id="t166" class="t" style="font-size:10.67px;line-height:10.67px;transform:translate(750.37px,546px) scaleX(1.0095);">0,00</span>
<span id="t167" class="t" style="font-size:10.67px;line-height:10.67px;transform:translate(774.61px,546px) scaleX(1.1503);">zł</span>
<span id="t168" class="t" style="font-size:10.67px;line-height:10.67px;transform:translate(54.05px,565px) scaleX(1.1484);">10</span>
<span id="t169" class="t" style="font-size:10.67px;line-height:10.67px;transform:translate(73.72px,565px) scaleX(0.9192);">MMP</span>
<span id="t170" class="t" style="font-size:10.67px;line-height:10.67px;transform:translate(133.87px,565px) scaleX(0.8952);">KLIENT</span>
<span id="t171" class="t" style="font-size:10.67px;line-height:10.67px;transform:translate(172.62px,565px) scaleX(0.9096);">NR</span>
<span id="t172" class="t" style="font-size:10.67px;line-height:10.67px;transform:translate(192.70px,565px) scaleX(0.9627);">803</span>
<span id="t173" class="t" style="font-size:10.67px;line-height:10.67px;transform:translate(267.86px,565px) scaleX(1.0231);">001020/22</span>
<span id="t174" class="t" style="font-size:10.67px;line-height:10.67px;transform:translate(323.39px,565px) scaleX(1.0342);">04.07.2022</span>
<span id="t175" class="t" style="font-size:10.67px;line-height:10.67px;transform:translate(556.03px,565px);">0</span>
<span id="t176" class="t" style="font-size:10.67px;line-height:10.67px;transform:translate(678.87px,565px) scaleX(1.0168);">0,00</span>
<span id="t177" class="t" style="font-size:10.67px;line-height:10.67px;transform:translate(703.77px,565px) scaleX(1.1455);">zł</span>
<span id="t178" class="t" style="font-size:10.67px;line-height:10.67px;transform:translate(750.37px,565px) scaleX(1.0095);">0,00</span>
<span id="t179" class="t" style="font-size:10.67px;line-height:10.67px;transform:translate(774.61px,565px) scaleX(1.1503);">zł</span>
<span id="t180" class="t" style="font-size:10.67px;line-height:10.67px;transform:translate(54.75px,584px) scaleX(1.1425);">11</span>
<span id="t181" class="t" style="font-size:10.67px;line-height:10.67px;transform:translate(73.72px,584px) scaleX(0.9192);">MMP</span>
<span id="t182" class="t" style="font-size:10.67px;line-height:10.67px;transform:translate(133.87px,584px) scaleX(0.8952);">KLIENT</span>
<span id="t183" class="t" style="font-size:10.67px;line-height:10.67px;transform:translate(172.62px,584px) scaleX(0.9096);">NR</span>
<span id="t184" class="t" style="font-size:10.67px;line-height:10.67px;transform:translate(192.28px,584px) scaleX(0.9791);">166</span>
<span id="t185" class="t" style="font-size:10.67px;line-height:10.67px;transform:translate(267.86px,584px) scaleX(1.0231);">000951/22</span>
<span id="t186" class="t" style="font-size:10.67px;line-height:10.67px;transform:translate(323.39px,584px) scaleX(1.0342);">04.07.2022</span>
<span id="t187" class="t" style="font-size:10.67px;line-height:10.67px;transform:translate(556.03px,584px);">0</span>
<span id="t188" class="t" style="font-size:10.67px;line-height:10.67px;transform:translate(678.87px,584px) scaleX(1.0168);">0,00</span>
<span id="t189" class="t" style="font-size:10.67px;line-height:10.67px;transform:translate(703.77px,584px) scaleX(1.1455);">zł</span>
<span id="t190" class="t" style="font-size:10.67px;line-height:10.67px;transform:translate(750.37px,584px) scaleX(1.0095);">0,00</span>
<span id="t191" class="t" style="font-size:10.67px;line-height:10.67px;transform:translate(774.61px,584px) scaleX(1.1503);">zł</span>
<span id="t192" class="t" style="font-size:10.67px;line-height:10.67px;transform:translate(54.13px,604px) scaleX(1.1621);">12</span>
<span id="t193" class="t" style="font-size:10.67px;line-height:10.67px;transform:translate(73.72px,604px) scaleX(0.9192);">MMP</span>
<span id="t194" class="t" style="font-size:10.67px;line-height:10.67px;transform:translate(133.87px,604px) scaleX(0.8952);">KLIENT</span>
<span id="t195" class="t" style="font-size:10.67px;line-height:10.67px;transform:translate(172.62px,604px) scaleX(0.9096);">NR</span>
<span id="t196" class="t" style="font-size:10.67px;line-height:10.67px;transform:translate(192.28px,604px) scaleX(0.9791);">166</span>
<span id="t197" class="t" style="font-size:10.67px;line-height:10.67px;transform:translate(267.86px,604px) scaleX(1.0231);">000991/22</span>
<span id="t198" class="t" style="font-size:10.67px;line-height:10.67px;transform:translate(323.39px,604px) scaleX(1.0342);">04.07.2022</span>
<span id="t199" class="t" style="font-size:10.67px;line-height:10.67px;transform:translate(556.03px,604px);">0</span>
<span id="t200" class="t" style="font-size:10.67px;line-height:10.67px;transform:translate(678.87px,604px) scaleX(1.0168);">0,00</span>
<span id="t201" class="t" style="font-size:10.67px;line-height:10.67px;transform:translate(703.77px,604px) scaleX(1.1455);">zł</span>
<span id="t202" class="t" style="font-size:10.67px;line-height:10.67px;transform:translate(750.37px,604px) scaleX(1.0095);">0,00</span>
<span id="t203" class="t" style="font-size:10.67px;line-height:10.67px;transform:translate(774.61px,604px) scaleX(1.1503);">zł</span>
<span id="t204" class="t" style="font-size:10.67px;line-height:10.67px;transform:translate(54.05px,623px) scaleX(1.1424);">13</span>
<span id="t205" class="t" style="font-size:10.67px;line-height:10.67px;transform:translate(73.72px,623px) scaleX(0.9192);">MMP</span>
<span id="t206" class="t" style="font-size:10.67px;line-height:10.67px;transform:translate(133.87px,623px) scaleX(0.8952);">KLIENT</span>
<span id="t207" class="t" style="font-size:10.67px;line-height:10.67px;transform:translate(172.62px,623px) scaleX(0.9096);">NR</span>
<span id="t208" class="t" style="font-size:10.67px;line-height:10.67px;transform:translate(192.70px,623px) scaleX(0.9627);">803</span>
<span id="t209" class="t" style="font-size:10.67px;line-height:10.67px;transform:translate(267.86px,623px) scaleX(1.0231);">000965/22</span>
<span id="t210" class="t" style="font-size:10.67px;line-height:10.67px;transform:translate(323.39px,623px) scaleX(1.0342);">04.07.2022</span>
<span id="t211" class="t" style="font-size:10.67px;line-height:10.67px;transform:translate(556.03px,623px);">0</span>
<span id="t212" class="t" style="font-size:10.67px;line-height:10.67px;transform:translate(678.87px,623px) scaleX(1.0168);">0,00</span>
<span id="t213" class="t" style="font-size:10.67px;line-height:10.67px;transform:translate(703.77px,623px) scaleX(1.1455);">zł</span>
<span id="t214" class="t" style="font-size:10.67px;line-height:10.67px;transform:translate(750.37px,623px) scaleX(1.0095);">0,00</span>
<span id="t215" class="t" style="font-size:10.67px;line-height:10.67px;transform:translate(774.61px,623px) scaleX(1.1503);">zł</span>
<span id="t216" class="t" style="font-size:10.67px;line-height:10.67px;transform:translate(54.07px,642px) scaleX(1.1229);">14</span>
<span id="t217" class="t" style="font-size:10.67px;line-height:10.67px;transform:translate(73.72px,642px) scaleX(0.9192);">MMP</span>
<span id="t218" class="t" style="font-size:10.67px;line-height:10.67px;transform:translate(133.87px,642px) scaleX(0.8952);">KLIENT</span>
<span id="t219" class="t" style="font-size:10.67px;line-height:10.67px;transform:translate(172.62px,642px) scaleX(0.9096);">NR</span>
<span id="t220" class="t" style="font-size:10.67px;line-height:10.67px;transform:translate(192.70px,642px) scaleX(0.9627);">803</span>
<span id="t221" class="t" style="font-size:10.67px;line-height:10.67px;transform:translate(267.86px,642px) scaleX(1.0231);">001019/22</span>
<span id="t222" class="t" style="font-size:10.67px;line-height:10.67px;transform:translate(323.39px,642px) scaleX(1.0342);">04.07.2022</span>
<span id="t223" class="t" style="font-size:10.67px;line-height:10.67px;transform:translate(556.03px,642px);">0</span>
<span id="t224" class="t" style="font-size:10.67px;line-height:10.67px;transform:translate(678.87px,642px) scaleX(1.0168);">0,00</span>
<span id="t225" class="t" style="font-size:10.67px;line-height:10.67px;transform:translate(703.77px,642px) scaleX(1.1455);">zł</span>
<span id="t226" class="t" style="font-size:10.67px;line-height:10.67px;transform:translate(750.37px,642px) scaleX(1.0095);">0,00</span>
<span id="t227" class="t" style="font-size:10.67px;line-height:10.67px;transform:translate(774.61px,642px) scaleX(1.1503);">zł</span>
<span id="t228" class="t" style="font-size:10.67px;line-height:10.67px;transform:translate(54.03px,661px) scaleX(1.1535);">15</span>
<span id="t229" class="t" style="font-size:10.67px;line-height:10.67px;transform:translate(73.72px,661px) scaleX(0.9192);">MMP</span>
<span id="t230" class="t" style="font-size:10.67px;line-height:10.67px;transform:translate(133.87px,661px) scaleX(0.8952);">KLIENT</span>
<span id="t231" class="t" style="font-size:10.67px;line-height:10.67px;transform:translate(172.62px,661px) scaleX(0.9096);">NR</span>
<span id="t232" class="t" style="font-size:10.67px;line-height:10.67px;transform:translate(192.28px,661px) scaleX(0.9791);">166</span>
<span id="t233" class="t" style="font-size:10.67px;line-height:10.67px;transform:translate(267.86px,661px) scaleX(1.0231);">001049/22</span>
<span id="t234" class="t" style="font-size:10.67px;line-height:10.67px;transform:translate(323.39px,661px) scaleX(1.0342);">04.07.2022</span>
<span id="t235" class="t" style="font-size:10.67px;line-height:10.67px;transform:translate(556.03px,661px);">0</span>
<span id="t236" class="t" style="font-size:10.67px;line-height:10.67px;transform:translate(678.87px,661px) scaleX(1.0168);">0,00</span>
<span id="t237" class="t" style="font-size:10.67px;line-height:10.67px;transform:translate(703.77px,661px) scaleX(1.1455);">zł</span>
<span id="t238" class="t" style="font-size:10.67px;line-height:10.67px;transform:translate(750.37px,661px) scaleX(1.0095);">0,00</span>
<span id="t239" class="t" style="font-size:10.67px;line-height:10.67px;transform:translate(774.61px,661px) scaleX(1.1503);">zł</span>
<span id="t240" class="t" style="font-size:10.67px;line-height:10.67px;transform:translate(54.05px,680px) scaleX(1.1424);">16</span>
<span id="t241" class="t" style="font-size:10.67px;line-height:10.67px;transform:translate(73.72px,680px) scaleX(0.9192);">MMP</span>
<span id="t242" class="t" style="font-size:10.67px;line-height:10.67px;transform:translate(133.87px,680px) scaleX(0.8952);">KLIENT</span>
<span id="t243" class="t" style="font-size:10.67px;line-height:10.67px;transform:translate(172.62px,680px) scaleX(0.9096);">NR</span>
<span id="t244" class="t" style="font-size:10.67px;line-height:10.67px;transform:translate(192.70px,680px) scaleX(0.9627);">803</span>
<span id="t245" class="t" style="font-size:10.67px;line-height:10.67px;transform:translate(267.86px,680px) scaleX(1.0231);">001055/22</span>
<span id="t246" class="t" style="font-size:10.67px;line-height:10.67px;transform:translate(323.39px,680px) scaleX(1.0342);">05.07.2022</span>
<span id="t247" class="t" style="font-size:10.67px;line-height:10.67px;transform:translate(556.03px,680px);">0</span>
<span id="t248" class="t" style="font-size:10.67px;line-height:10.67px;transform:translate(678.87px,680px) scaleX(1.0168);">0,00</span>
<span id="t249" class="t" style="font-size:10.67px;line-height:10.67px;transform:translate(703.77px,680px) scaleX(1.1455);">zł</span>
<span id="t250" class="t" style="font-size:10.67px;line-height:10.67px;transform:translate(750.37px,680px) scaleX(1.0095);">0,00</span>
<span id="t251" class="t" style="font-size:10.67px;line-height:10.67px;transform:translate(774.61px,680px) scaleX(1.1503);">zł</span>
<span id="t252" class="t" style="font-size:10.67px;line-height:10.67px;transform:translate(54.13px,700px) scaleX(1.1442);">17</span>
<span id="t253" class="t" style="font-size:10.67px;line-height:10.67px;transform:translate(73.72px,700px) scaleX(0.9192);">MMP</span>
<span id="t254" class="t" style="font-size:10.67px;line-height:10.67px;transform:translate(133.87px,700px) scaleX(0.8952);">KLIENT</span>
<span id="t255" class="t" style="font-size:10.67px;line-height:10.67px;transform:translate(172.62px,700px) scaleX(0.9096);">NR</span>
<span id="t256" class="t" style="font-size:10.67px;line-height:10.67px;transform:translate(192.77px,700px) scaleX(0.9579);">287</span>
<span id="t257" class="t" style="font-size:10.67px;line-height:10.67px;transform:translate(267.86px,700px) scaleX(1.0231);">001060/22</span>
<span id="t258" class="t" style="font-size:10.67px;line-height:10.67px;transform:translate(323.39px,700px) scaleX(1.0342);">06.07.2022</span>
<span id="t259" class="t" style="font-size:10.67px;line-height:10.67px;transform:translate(556.03px,700px);">0</span>
<span id="t260" class="t" style="font-size:10.67px;line-height:10.67px;transform:translate(678.87px,700px) scaleX(1.0168);">0,00</span>
<span id="t261" class="t" style="font-size:10.67px;line-height:10.67px;transform:translate(703.77px,700px) scaleX(1.1455);">zł</span>
<span id="t262" class="t" style="font-size:10.67px;line-height:10.67px;transform:translate(750.37px,700px) scaleX(1.0095);">0,00</span>
<span id="t263" class="t" style="font-size:10.67px;line-height:10.67px;transform:translate(774.61px,700px) scaleX(1.1503);">zł</span>
<span id="t264" class="t" style="font-size:10.67px;line-height:10.67px;transform:translate(54.05px,719px) scaleX(1.1395);">18</span>
<span id="t265" class="t" style="font-size:10.67px;line-height:10.67px;transform:translate(73.72px,719px) scaleX(0.9192);">MMP</span>
<span id="t266" class="t" style="font-size:10.67px;line-height:10.67px;transform:translate(133.87px,719px) scaleX(0.8952);">KLIENT</span>
<span id="t267" class="t" style="font-size:10.67px;line-height:10.67px;transform:translate(172.62px,719px) scaleX(0.9096);">NR</span>
<span id="t268" class="t" style="font-size:10.67px;line-height:10.67px;transform:translate(192.77px,719px) scaleX(0.9579);">287</span>
<span id="t269" class="t" style="font-size:10.67px;line-height:10.67px;transform:translate(267.86px,719px) scaleX(1.0231);">001058/22</span>
<span id="t270" class="t" style="font-size:10.67px;line-height:10.67px;transform:translate(323.39px,719px) scaleX(1.0342);">06.07.2022</span>
<span id="t271" class="t" style="font-size:10.67px;line-height:10.67px;transform:translate(556.03px,719px);">0</span>
<span id="t272" class="t" style="font-size:10.67px;line-height:10.67px;transform:translate(678.87px,719px) scaleX(1.0168);">0,00</span>
<span id="t273" class="t" style="font-size:10.67px;line-height:10.67px;transform:translate(703.77px,719px) scaleX(1.1455);">zł</span>
<span id="t274" class="t" style="font-size:10.67px;line-height:10.67px;transform:translate(750.37px,719px) scaleX(1.0095);">0,00</span>
<span id="t275" class="t" style="font-size:10.67px;line-height:10.67px;transform:translate(774.61px,719px) scaleX(1.1503);">zł</span>
<span id="t276" class="t" style="font-size:10.67px;line-height:10.67px;transform:translate(54.13px,738px) scaleX(1.1434);">19</span>
<span id="t277" class="t" style="font-size:10.67px;line-height:10.67px;transform:translate(73.72px,738px) scaleX(0.9192);">MMP</span>
<span id="t278" class="t" style="font-size:10.67px;line-height:10.67px;transform:translate(133.87px,738px) scaleX(0.8952);">KLIENT</span>
<span id="t279" class="t" style="font-size:10.67px;line-height:10.67px;transform:translate(172.62px,738px) scaleX(0.9096);">NR</span>
<span id="t280" class="t" style="font-size:10.67px;line-height:10.67px;transform:translate(192.77px,738px) scaleX(0.9579);">287</span>
<span id="t281" class="t" style="font-size:10.67px;line-height:10.67px;transform:translate(267.86px,738px) scaleX(1.0231);">001059/22</span>
<span id="t282" class="t" style="font-size:10.67px;line-height:10.67px;transform:translate(323.39px,738px) scaleX(1.0342);">06.07.2022</span>
<span id="t283" class="t" style="font-size:10.67px;line-height:10.67px;transform:translate(556.03px,738px);">0</span>
<span id="t284" class="t" style="font-size:10.67px;line-height:10.67px;transform:translate(678.87px,738px) scaleX(1.0168);">0,00</span>
<span id="t285" class="t" style="font-size:10.67px;line-height:10.67px;transform:translate(703.77px,738px) scaleX(1.1455);">zł</span>
<span id="t286" class="t" style="font-size:10.67px;line-height:10.67px;transform:translate(750.37px,738px) scaleX(1.0095);">0,00</span>
<span id="t287" class="t" style="font-size:10.67px;line-height:10.67px;transform:translate(774.61px,738px) scaleX(1.1503);">zł</span>
<span id="t288" class="t" style="font-size:10.67px;line-height:10.67px;transform:translate(54.67px,757px) scaleX(1.0764);">20</span>
<span id="t289" class="t" style="font-size:10.67px;line-height:10.67px;transform:translate(73.66px,757px) scaleX(0.9475);">Nk-</span>
<span id="t290" class="t" style="font-size:10.67px;line-height:10.67px;transform:translate(133.87px,757px) scaleX(0.8952);">KLIENT</span>
<span id="t291" class="t" style="font-size:10.67px;line-height:10.67px;transform:translate(172.62px,757px) scaleX(0.9096);">NR</span>
<span id="t292" class="t" style="font-size:10.67px;line-height:10.67px;transform:translate(192.76px,757px);">2</span>
<span id="t293" class="t" style="font-size:10.67px;line-height:10.67px;transform:translate(267.85px,757px) scaleX(0.9974);">0331/22/S</span>
<span id="t294" class="t" style="font-size:10.67px;line-height:10.67px;transform:translate(323.39px,757px) scaleX(1.0342);">06.07.2022</span>
<span id="t295" class="t" style="font-size:10.67px;line-height:10.67px;transform:translate(556.03px,757px);">0</span>
<span id="t296" class="t" style="font-size:10.67px;line-height:10.67px;transform:translate(678.87px,757px) scaleX(1.0168);">0,00</span>
<span id="t297" class="t" style="font-size:10.67px;line-height:10.67px;transform:translate(703.77px,757px) scaleX(1.1455);">zł</span>
<span id="t298" class="t" style="font-size:10.67px;line-height:10.67px;transform:translate(750.37px,757px) scaleX(1.0095);">0,00</span>
<span id="t299" class="t" style="font-size:10.67px;line-height:10.67px;transform:translate(774.61px,757px) scaleX(1.1503);">zł</span>
<span id="t300" class="t" style="font-size:10.67px;line-height:10.67px;transform:translate(54.67px,776px) scaleX(1.0918);">21</span>
<span id="t301" class="t" style="font-size:10.67px;line-height:10.67px;transform:translate(73.56px,776px) scaleX(1.0094);">PZ</span>
<span id="t302" class="t" style="font-size:10.67px;line-height:10.67px;transform:translate(133.87px,776px) scaleX(0.8952);">KLIENT</span>
<span id="t303" class="t" style="font-size:10.67px;line-height:10.67px;transform:translate(172.62px,776px) scaleX(0.9096);">NR</span>
<span id="t304" class="t" style="font-size:10.67px;line-height:10.67px;transform:translate(192.70px,776px) scaleX(0.9627);">803</span>
<span id="t305" class="t" style="font-size:10.67px;line-height:10.67px;transform:translate(267.85px,776px) scaleX(0.9974);">0890/22/S</span>
<span id="t306" class="t" style="font-size:10.67px;line-height:10.67px;transform:translate(323.39px,776px) scaleX(1.0342);">06.07.2022</span>
<span id="t307" class="t" style="font-size:10.67px;line-height:10.67px;transform:translate(556.03px,776px);">0</span>
<span id="t308" class="t" style="font-size:10.67px;line-height:10.67px;transform:translate(607.41px,776px) scaleX(0.9891);">0,00</span>
<span id="t309" class="t" style="font-size:10.67px;line-height:10.67px;transform:translate(631.53px,776px) scaleX(1.0829);">zł</span>
<span id="t310" class="t" style="font-size:10.67px;line-height:10.67px;transform:translate(750.37px,776px) scaleX(1.0095);">0,00</span>
<span id="t311" class="t" style="font-size:10.67px;line-height:10.67px;transform:translate(774.61px,776px) scaleX(1.1503);">zł</span>
<span id="t312" class="t" style="font-size:10.67px;line-height:10.67px;transform:translate(54.67px,796px) scaleX(1.0929);">22</span>
<span id="t313" class="t" style="font-size:10.67px;line-height:10.67px;transform:translate(73.56px,796px) scaleX(1.0094);">PZ</span>
<span id="t314" class="t" style="font-size:10.67px;line-height:10.67px;transform:translate(133.87px,796px) scaleX(0.8952);">KLIENT</span>
<span id="t315" class="t" style="font-size:10.67px;line-height:10.67px;transform:translate(172.62px,796px) scaleX(0.9096);">NR</span>
<span id="t316" class="t" style="font-size:10.67px;line-height:10.67px;transform:translate(192.70px,796px) scaleX(0.9627);">803</span>
<span id="t317" class="t" style="font-size:10.67px;line-height:10.67px;transform:translate(267.85px,796px) scaleX(0.9974);">0894/22/S</span>
<span id="t318" class="t" style="font-size:10.67px;line-height:10.67px;transform:translate(323.39px,796px) scaleX(1.0342);">06.07.2022</span>
<span id="t319" class="t" style="font-size:10.67px;line-height:10.67px;transform:translate(556.03px,796px);">0</span>
<span id="t320" class="t" style="font-size:10.67px;line-height:10.67px;transform:translate(607.41px,796px) scaleX(0.9891);">0,00</span>
<span id="t321" class="t" style="font-size:10.67px;line-height:10.67px;transform:translate(631.53px,796px) scaleX(1.0829);">zł</span>
<span id="t322" class="t" style="font-size:10.67px;line-height:10.67px;transform:translate(750.37px,796px) scaleX(1.0095);">0,00</span>
<span id="t323" class="t" style="font-size:10.67px;line-height:10.67px;transform:translate(774.61px,796px) scaleX(1.1503);">zł</span>
<span id="t324" class="t" style="font-size:10.67px;line-height:10.67px;transform:translate(54.67px,815px) scaleX(1.0747);">23</span>
<span id="t325" class="t" style="font-size:10.67px;line-height:10.67px;transform:translate(73.56px,815px) scaleX(1.0094);">PZ</span>
<span id="t326" class="t" style="font-size:10.67px;line-height:10.67px;transform:translate(133.87px,815px) scaleX(0.8952);">KLIENT</span>
<span id="t327" class="t" style="font-size:10.67px;line-height:10.67px;transform:translate(172.62px,815px) scaleX(0.9096);">NR</span>
<span id="t328" class="t" style="font-size:10.67px;line-height:10.67px;transform:translate(192.70px,815px) scaleX(0.9627);">803</span>
<span id="t329" class="t" style="font-size:10.67px;line-height:10.67px;transform:translate(267.85px,815px) scaleX(0.9974);">0889/22/S</span>
<span id="t330" class="t" style="font-size:10.67px;line-height:10.67px;transform:translate(323.39px,815px) scaleX(1.0342);">06.07.2022</span>
<span id="t331" class="t" style="font-size:10.67px;line-height:10.67px;transform:translate(556.03px,815px);">0</span>
<span id="t332" class="t" style="font-size:10.67px;line-height:10.67px;transform:translate(607.41px,815px) scaleX(0.9891);">0,00</span>
<span id="t333" class="t" style="font-size:10.67px;line-height:10.67px;transform:translate(631.53px,815px) scaleX(1.0829);">zł</span>
<span id="t334" class="t" style="font-size:10.67px;line-height:10.67px;transform:translate(750.37px,815px) scaleX(1.0095);">0,00</span>
<span id="t335" class="t" style="font-size:10.67px;line-height:10.67px;transform:translate(774.61px,815px) scaleX(1.1503);">zł</span>
<span id="t336" class="t" style="font-size:10.67px;line-height:10.67px;transform:translate(54.60px,834px) scaleX(1.0538);">24</span>
<span id="t337" class="t" style="font-size:10.67px;line-height:10.67px;transform:translate(73.56px,834px) scaleX(1.0094);">PZ</span>
<span id="t338" class="t" style="font-size:10.67px;line-height:10.67px;transform:translate(133.87px,834px) scaleX(0.8952);">KLIENT</span>
<span id="t339" class="t" style="font-size:10.67px;line-height:10.67px;transform:translate(172.62px,834px) scaleX(0.9096);">NR</span>
<span id="t340" class="t" style="font-size:10.67px;line-height:10.67px;transform:translate(192.70px,834px) scaleX(0.9627);">803</span>
<span id="t341" class="t" style="font-size:10.67px;line-height:10.67px;transform:translate(267.85px,834px) scaleX(0.9974);">0898/22/S</span>
<span id="t342" class="t" style="font-size:10.67px;line-height:10.67px;transform:translate(323.39px,834px) scaleX(1.0342);">07.07.2022</span>
<span id="t343" class="t" style="font-size:10.67px;line-height:10.67px;transform:translate(556.03px,834px);">0</span>
<span id="t344" class="t" style="font-size:10.67px;line-height:10.67px;transform:translate(607.41px,834px) scaleX(0.9891);">0,00</span>
<span id="t345" class="t" style="font-size:10.67px;line-height:10.67px;transform:translate(631.53px,834px) scaleX(1.0829);">zł</span>
<span id="t346" class="t" style="font-size:10.67px;line-height:10.67px;transform:translate(750.37px,834px) scaleX(1.0095);">0,00</span>
<span id="t347" class="t" style="font-size:10.67px;line-height:10.67px;transform:translate(774.61px,834px) scaleX(1.1503);">zł</span>
<span id="t348" class="t" style="font-size:10.67px;line-height:10.67px;transform:translate(54.67px,853px) scaleX(1.0818);">25</span>
<span id="t349" class="t" style="font-size:10.67px;line-height:10.67px;transform:translate(73.56px,853px) scaleX(1.0094);">PZ</span>
<span id="t350" class="t" style="font-size:10.67px;line-height:10.67px;transform:translate(133.87px,853px) scaleX(0.8952);">KLIENT</span>
<span id="t351" class="t" style="font-size:10.67px;line-height:10.67px;transform:translate(172.62px,853px) scaleX(0.9096);">NR</span>
<span id="t352" class="t" style="font-size:10.67px;line-height:10.67px;transform:translate(192.70px,853px) scaleX(0.9627);">803</span>
<span id="t353" class="t" style="font-size:10.67px;line-height:10.67px;transform:translate(267.85px,853px) scaleX(0.9974);">0900/22/S</span>
<span id="t354" class="t" style="font-size:10.67px;line-height:10.67px;transform:translate(323.39px,853px) scaleX(1.0342);">08.07.2022</span>
<span id="t355" class="t" style="font-size:10.67px;line-height:10.67px;transform:translate(556.03px,853px);">0</span>
<span id="t356" class="t" style="font-size:10.67px;line-height:10.67px;transform:translate(607.41px,853px) scaleX(0.9891);">0,00</span>
<span id="t357" class="t" style="font-size:10.67px;line-height:10.67px;transform:translate(631.53px,853px) scaleX(1.0829);">zł</span>
<span id="t358" class="t" style="font-size:10.67px;line-height:10.67px;transform:translate(750.37px,853px) scaleX(1.0095);">0,00</span>
<span id="t359" class="t" style="font-size:10.67px;line-height:10.67px;transform:translate(774.61px,853px) scaleX(1.1503);">zł</span>
</body>
</html>
